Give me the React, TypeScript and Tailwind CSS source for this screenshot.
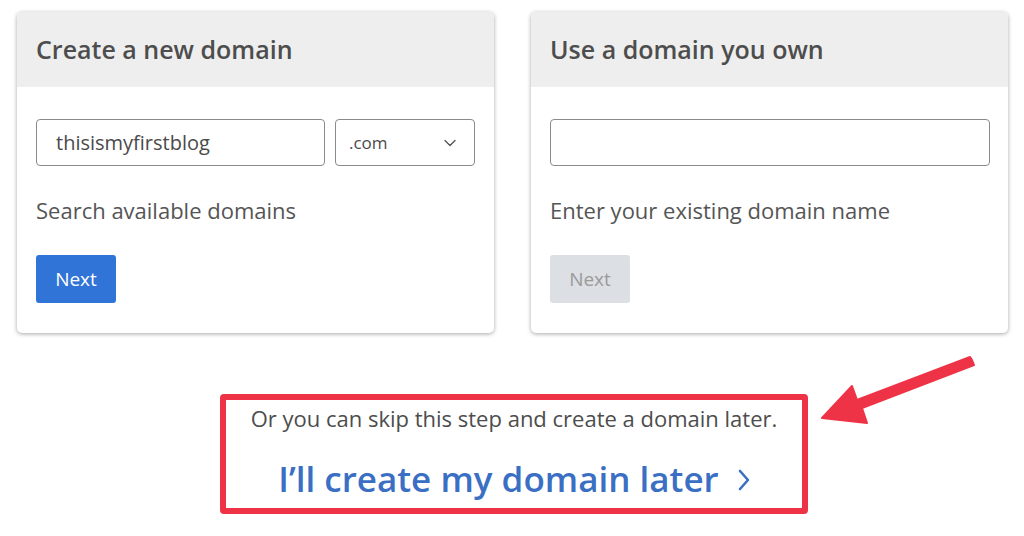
import { ChevronDown } from 'lucide-react'

function Card({ title, children }: { title: string; children: React.ReactNode }) {
  return (
    <div className="h-[321px] overflow-hidden rounded-[5px] bg-white shadow-[0_1px_4px_rgba(0,0,0,0.35)]">
      <div className="flex h-[75px] items-center bg-[#eeeeee] px-[19px]">
        <h2 className="text-[25px] font-semibold text-[#4d4d4d]">{title}</h2>
      </div>
      <div className="px-[19px] pt-[32px]">{children}</div>
    </div>
  )
}

export default function App() {
  return (
    <div className="relative h-[536px] w-[1024px] overflow-hidden bg-white font-['Open_Sans',sans-serif]">
      <div className="grid grid-cols-2 gap-[37px] px-[17px] pr-[16px] pt-[12px]">
        <Card title="Create a new domain">
          <div className="flex gap-[10px]">
            <div className="flex h-[47px] w-[289px] items-center rounded-[4px] border border-[#8a8a8a] px-[19px] text-[20px] text-[#4a4a4a]">
              thisismyfirstblog
            </div>
            <div className="flex h-[47px] w-[140px] items-center justify-between rounded-[4px] border border-[#8a8a8a] pl-[13px] pr-[14px] text-[17px] text-[#4a4a4a]">
              <span>.com</span>
              <ChevronDown size={20} strokeWidth={1.6} className="text-[#555]" />
            </div>
          </div>
          <p className="mt-[28px] text-[22px] text-[#555]">Search available domains</p>
          <button className="mt-[28px] h-[48px] w-[80px] rounded-[3px] bg-[#2f74d6] text-[19px] text-white">Next</button>
        </Card>
        <Card title="Use a domain you own">
          <div className="h-[47px] w-[440px] rounded-[4px] border border-[#8a8a8a]" />
          <p className="mt-[28px] text-[22px] text-[#555]">Enter your existing domain name</p>
          <button className="mt-[28px] h-[48px] w-[80px] rounded-[3px] bg-[#dcdfe4] text-[19px] text-[#9a9a9a]">Next</button>
        </Card>
      </div>

      <div className="mt-[61px] flex justify-center pl-[4px]">
        <div className="flex h-[120px] w-[588px] flex-col items-center rounded-[4px] border-[6px] border-[#ef3346] pt-[2px]">
          <p className="text-[22px] text-[#4d4d4d]">Or you can skip this step and create a domain later.</p>
          <a className="mt-[18px] flex items-center gap-[19px] text-[35px] font-semibold text-[#3a6fc4]">
            I’ll create my domain later
            <svg width="12" height="22" viewBox="0 0 12 22" fill="none" className="mt-[2px]">
              <path d="M2 2 L10 11 L2 20" stroke="#3a6fc4" strokeWidth="2.6" strokeLinecap="round" strokeLinejoin="round" />
            </svg>
          </a>
        </div>
      </div>

      <svg className="absolute left-0 top-0" width="1024" height="536" viewBox="0 0 1024 536">
        <path
          d="M972 360 L974 365 L862 408 L867 423 L822 418 L852 386 L857 400 L970 357 Z"
          fill="#ef3346"
          stroke="#ef3346"
          strokeWidth="2"
          strokeLinejoin="round"
        />
      </svg>
    </div>
  )
}
